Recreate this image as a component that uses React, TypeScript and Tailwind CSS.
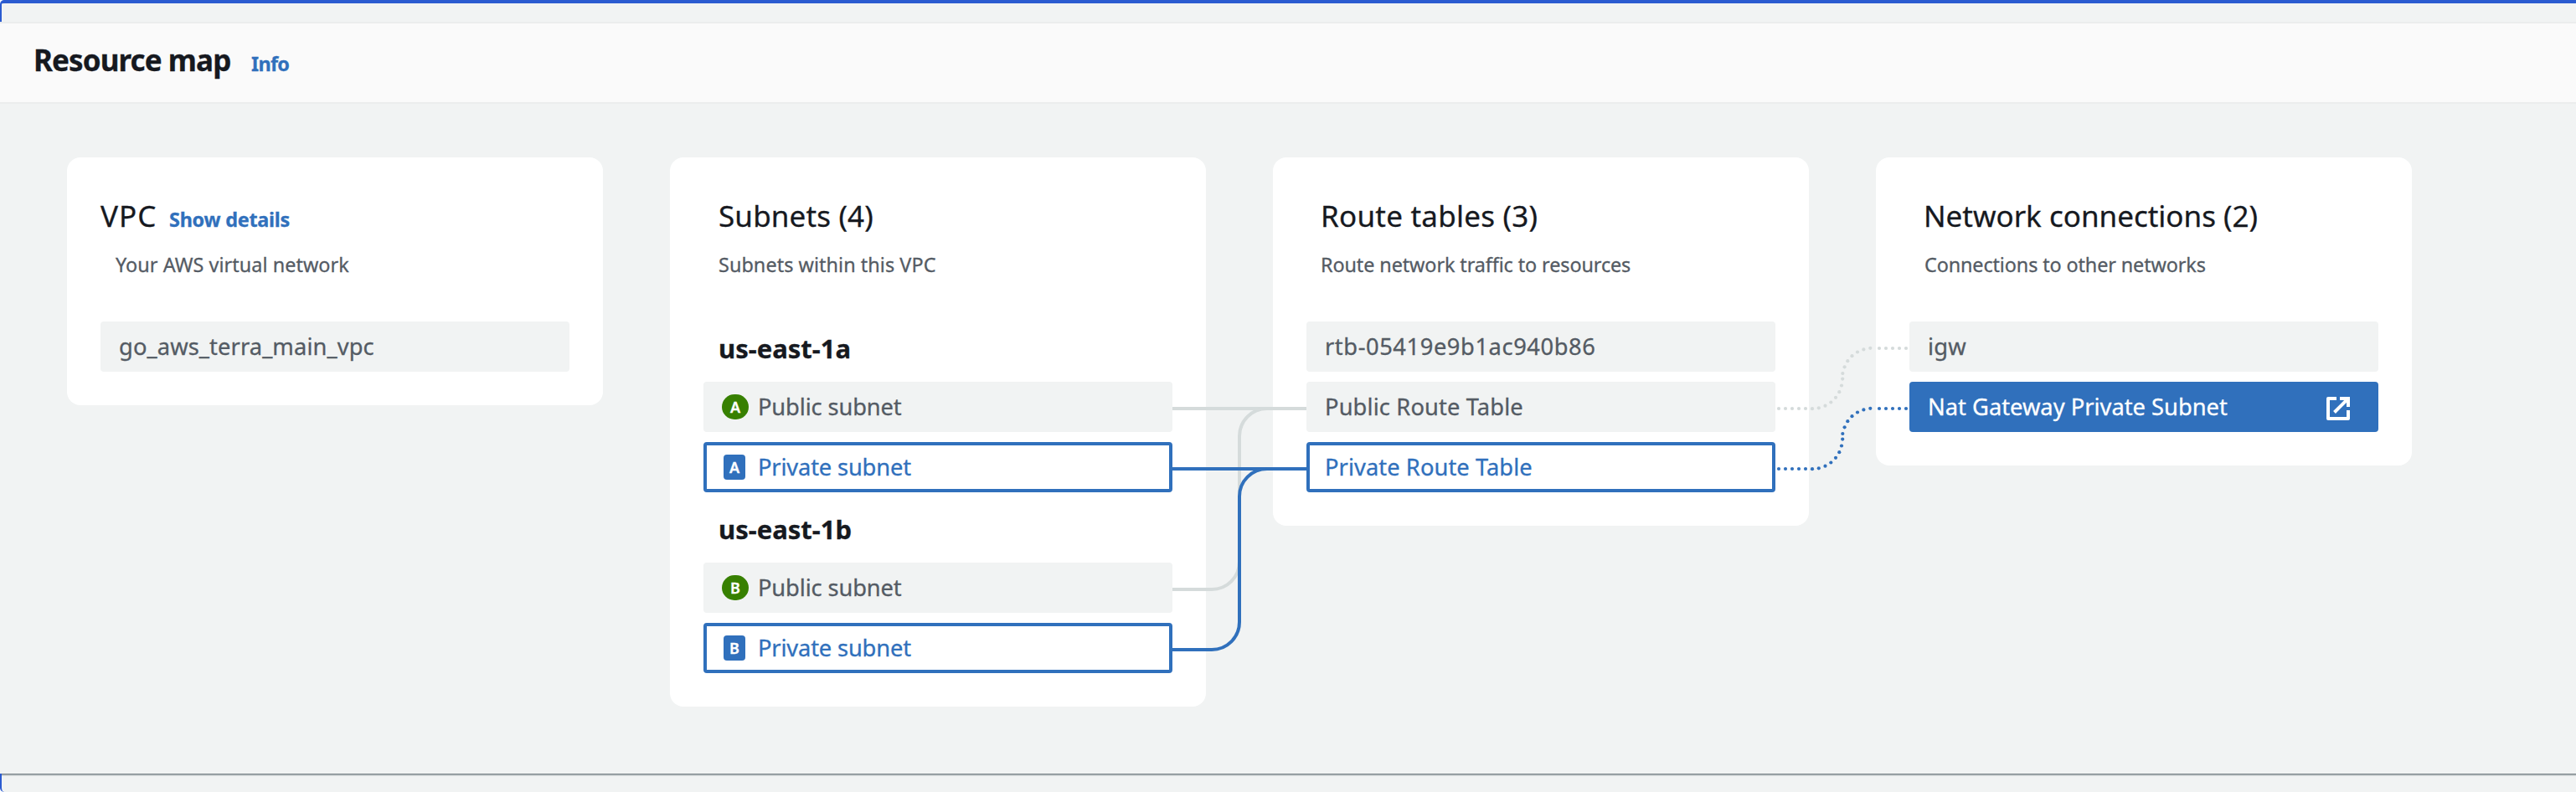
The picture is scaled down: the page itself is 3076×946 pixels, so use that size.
import type { ReactNode } from "react";

type ItemProps = {
  children: ReactNode;
  tone?: "idle" | "related" | "active";
  className?: string;
};

const tones = {
  idle: "bg-[#f1f3f3] text-[#545b64] pl-[22px]",
  related: "bg-white text-[#3070bc] border-4 border-[#3070bc] pl-[18px]",
  active: "bg-[#3070bc] text-white pl-[22px]",
};

function Item({ children, tone = "idle", className = "" }: ItemProps) {
  return (
    <li className={`flex h-[60px] items-center rounded-[4px] text-[27.3px] leading-[52px] whitespace-nowrap ${tones[tone]} ${className}`}>
      {children}
    </li>
  );
}

function Zone({ letter, kind }: { letter: string; kind: "public" | "private" }) {
  const shape =
    kind === "public" ? "w-8 rounded-full bg-[#378001]" : "ml-[2px] w-[26px] rounded-[4px] bg-[#3070bc]";
  return (
    <span className="mr-[11px] flex w-8">
      <span className={`flex h-[30px] items-center justify-center text-[18px] leading-[30px] font-semibold text-white ${shape}`}>
        {letter}
      </span>
    </span>
  );
}

function Column({ title, subtitle, children }: { title: ReactNode; subtitle: ReactNode; children: ReactNode }) {
  return (
    <section className="w-[640px] rounded-2xl bg-white px-10 pt-[47px] pb-10">
      <h3 className="flex h-[44px] items-baseline text-[35px] leading-[46px] whitespace-nowrap text-[#16191f]">{title}</h3>
      <p className="mt-[21px] mb-[52px] pl-4 text-[23.4px] leading-8 whitespace-nowrap text-[#545b64]">{subtitle}</p>
      {children}
    </section>
  );
}

function Group({ name, letter }: { name: string; letter: string }) {
  return (
    <div>
      <h4 className="h-[72px] pl-[18px] text-[31px] leading-[64px] font-bold text-[#16191f]">{name}</h4>
      <ul className="flex flex-col gap-3">
        <Item>
          <Zone letter={letter} kind="public" />
          <span className="tracking-[-0.14px]">Public subnet</span>
        </Item>
        <Item tone="related">
          <Zone letter={letter} kind="private" />
          <span className="tracking-[-0.17px]">Private subnet</span>
        </Item>
      </ul>
    </div>
  );
}

const dots: [number, number][] = [
  [2124, 488], [2132, 488], [2140, 488], [2148, 488], [2156, 488], [2164, 488.2],
  [2171.8, 487.3], [2179.5, 484.7], [2186.3, 480.5], [2192, 474.8], [2196.3, 468.2],
  [2199, 460.5], [2200.2, 452.6], [2200.3, 446], [2202.6, 438.3], [2206.3, 431.2],
  [2211.5, 425.2], [2218, 420.5], [2225.4, 417.4], [2233.3, 415.8],
  [2244, 416], [2252, 416], [2260, 416], [2268, 416], [2276, 416],
];

function Connectors() {
  return (
    <svg className="pointer-events-none absolute top-0 left-0" width="3076" height="800" viewBox="0 124 3076 800" fill="none">
      <g stroke="#d5dbdb" strokeWidth="4">
        <path d="M1400 488H1560" />
        <path d="M1400 704H1447A33 33 0 0 0 1480 671V521A33 33 0 0 1 1513 488" />
      </g>
      <g stroke="#3070bc" strokeWidth="4">
        <path d="M1400 560H1560" />
        <path d="M1400 776H1447A33 33 0 0 0 1480 743V593A33 33 0 0 1 1513 560" />
      </g>
      <g fill="#d5dbdb">
        {dots.map(([x, y]) => (
          <circle key={`${x}`} cx={x} cy={y} r="2.1" />
        ))}
      </g>
      <g fill="#3070bc">
        {dots.map(([x, y]) => (
          <circle key={`${x}`} cx={x} cy={y + 72} r="2.1" />
        ))}
      </g>
    </svg>
  );
}

export default function App() {
  return (
    <div className="flex h-[946px] w-[3076px] flex-col overflow-hidden bg-white font-['Noto_Sans','Open_Sans',sans-serif] [-webkit-text-stroke:0.3px]">
      <div className="h-[26px] shrink-0 rounded-tl-[5px] border-t-4 border-l-2 border-[#2b5bd0] bg-[#f1f3f3]" />
      <header className="flex h-[98px] shrink-0 items-baseline border-y-2 border-[#ebeded] bg-[#fafafa] pl-10 leading-[88px]">
        <h2 className="w-[260px] text-[35px] font-bold tracking-[-0.91px] whitespace-nowrap text-[#16191f]">Resource map</h2>
        <a className="text-[23.4px] font-bold tracking-[-0.7px] text-[#3070bc]">Info</a>
      </header>
      <main className="relative h-[800px] shrink-0 bg-[#f1f3f3]">
        <div className="flex items-start gap-20 pt-16 pl-20">
          <Column
            title={
              <>
                <span className="w-[82px] tracking-[1px]">VPC</span>
                <a className="text-[23.4px] font-bold tracking-[-0.24px] text-[#3070bc]">Show details</a>
              </>
            }
            subtitle={<span className="ml-[2px] tracking-[0.05px]">Your AWS virtual network</span>}
          >
            <ul>
              <Item>
                <span className="tracking-[0.1px]">go_aws_terra_main_vpc</span>
              </Item>
            </ul>
          </Column>
          <Column
            title={<span className="ml-[18px] tracking-[0.15px]">Subnets (4)</span>}
            subtitle={<span className="ml-[2px] tracking-[0.06px]">Subnets within this VPC</span>}
          >
            <div className="flex flex-col gap-3">
              <Group name="us-east-1a" letter="A" />
              <Group name="us-east-1b" letter="B" />
            </div>
          </Column>
          <Column
            title={<span className="ml-[17px] tracking-[0.23px]">Route tables (3)</span>}
            subtitle={<span className="ml-px tracking-[-0.1px]">Route network traffic to resources</span>}
          >
            <ul className="flex flex-col gap-3">
              <Item>
                <span className="tracking-[0.57px]">rtb-05419e9b1ac940b86</span>
              </Item>
              <Item>
                <span className="tracking-[0.12px]">Public Route Table</span>
              </Item>
              <Item tone="related">
                <span className="tracking-[0.06px]">Private Route Table</span>
              </Item>
            </ul>
          </Column>
          <Column
            title={<span className="ml-[17px]">Network connections (2)</span>}
            subtitle={<span className="ml-[2px] tracking-[-0.12px]">Connections to other networks</span>}
          >
            <ul className="flex flex-col gap-3">
              <Item>
                <span className="tracking-[0.2px]">igw</span>
              </Item>
              <Item tone="active" className="justify-between pr-[34px]">
                <span>Nat Gateway Private Subnet</span>
                <svg className="mt-1" width="28" height="28" viewBox="0 0 28 28" fill="none" stroke="currentColor" strokeWidth="4">
                  <path d="M12 2H2V26H26V16" strokeLinejoin="round" />
                  <path d="M16 2H26V12M9.5 18.5L25 3" />
                </svg>
              </Item>
            </ul>
          </Column>
        </div>
        <Connectors />
      </main>
      <div className="flex h-[22px] shrink-0 flex-col rounded-bl-[5px] border-l-2 border-[#2b5bd0] bg-[#f1f3f3]">
        <div className="h-px bg-[#7f888c]" />
        <div className="h-px bg-[#aab1b4]" />
        <div className="h-px bg-[#d5d9da]" />
      </div>
    </div>
  );
}
